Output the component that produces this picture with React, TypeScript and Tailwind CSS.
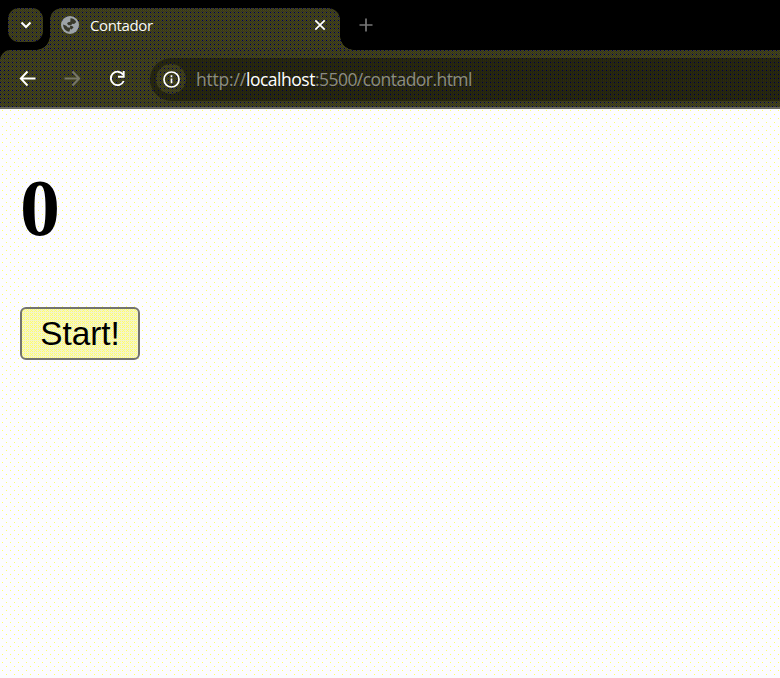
import React from "react";

const toolbarGrain =
  "bg-[#3a3a20] bg-[image:conic-gradient(from_270deg_at_1px_1px,#00004c_90deg,transparent_0),conic-gradient(#3c3c38_25%,#404000_0_50%,#383834_0_75%,#404000_0)] bg-[size:4px_4px,2px_2px]";
const fieldGrain =
  "bg-[#242410] bg-[image:conic-gradient(from_270deg_at_1px_1px,#000040_90deg,transparent_0),conic-gradient(#242420_25%,#2c2c00_0_50%,#20201c_0_75%,#282800_0)] bg-[size:4px_4px,2px_2px]";
const pageGrain =
  "bg-[#fcfcff] bg-[image:conic-gradient(from_270deg_at_1px_1px,#ffff6a_90deg,transparent_0),conic-gradient(from_270deg_at_1px_1px,#ffff6a_90deg,transparent_0)] bg-[size:8px_8px,8px_8px] bg-[position:2px_1px,6px_5px]";
const buttonGrain =
  "bg-[#f4f4c8] bg-[image:conic-gradient(from_270deg_at_1px_1px,#ffff6a_90deg,transparent_0),conic-gradient(from_270deg_at_1px_1px,#ffff6a_90deg,transparent_0)] bg-[size:2px_2px,4px_4px] bg-[position:0_0,1px_1px]";

function TabStrip() {
  return (
    <div className="flex h-[50px] items-start bg-black pl-2 pt-2">
      <div className={`flex h-[34px] w-[35px] items-center justify-center rounded-[11px] ${toolbarGrain}`}>
        <svg width="12" height="8" viewBox="0 0 12 8" fill="none" stroke="#fff" strokeWidth="2">
          <path d="M1.500 1.500 6 6l4.500-4.500" />
        </svg>
      </div>
      <div className={`relative ml-[7px] flex h-[42px] w-[290px] items-start rounded-t-[12px] pl-[11px] pr-[14px] ${toolbarGrain}`}>
        <div className={`absolute bottom-0 -left-[14px] size-[14px] ${toolbarGrain} [mask-image:radial-gradient(circle_at_0_0,transparent_13.500px,#000_14px)]`} />
        <div className={`absolute bottom-0 -right-[14px] size-[14px] ${toolbarGrain} [mask-image:radial-gradient(circle_at_100%_0,transparent_13.500px,#000_14px)]`} />
        <svg className="mt-2" width="18" height="18" viewBox="0 0 18 18">
          <circle cx="9" cy="9" r="9" fill="#9da3a8" />
          <path d="M9.500 2.200c2.500.1 4.800 1.500 5.800 3.800l-2.200 2-2-.3-.8 1.500H7.600L6 7.700l1-1.500 2.300-.4zM2.100 8.500l3.200 1.300 1.500 1.700h2l.5 1.500-1 2.800C4.700 15.400 2.200 12.400 2.100 8.500z" fill="#38382b" />
          <path d="m9 9.700 2.200.2 1.400 1.400-2 2.300-1.500-.9z" fill="#38382b" />
        </svg>
        <span className="ml-[11px] mt-[7px] text-[15px] leading-5 tracking-[-0.380px] text-[#fafaf5]">Contador</span>
        <svg className="ml-auto mt-[11px]" width="12" height="12" viewBox="0 0 12 12" stroke="#fff" strokeWidth="1.700">
          <path d="m1.300 1.300 9.400 9.400m0-9.400-9.400 9.400" />
        </svg>
      </div>
      <svg className="ml-[19px] mt-[10px]" width="14" height="14" viewBox="0 0 14 14" stroke="#777" strokeWidth="1.700">
        <path d="M7 .500v13M.500 7h13" />
      </svg>
    </div>
  );
}

function Toolbar() {
  return (
    <div className="h-[59px] bg-black">
      <div className={`flex h-[59px] items-start rounded-tl-[11px] border-b-2 border-[#67675c] pl-[19px] pt-2 ${toolbarGrain}`}>
        <div className="flex h-[42px] items-center">
          <svg width="18" height="18" viewBox="0 0 18 18" fill="none" stroke="#fff" strokeWidth="1.900">
            <path d="M8.500 1.500 1.800 8.500l6.700 7M2 8.500h14.500" />
          </svg>
          <svg className="ml-[27px]" width="18" height="18" viewBox="0 0 18 18" fill="none" stroke="#777767" strokeWidth="1.900">
            <path d="m8.500 1.500 6.700 7-6.700 7M15 8.500H.500" />
          </svg>
          <svg className="ml-[26px]" width="18" height="18" viewBox="0 0 18 18" fill="none" stroke="#fff" strokeWidth="1.900">
            <path d="M15 4.500A6.700 6.700 0 1 0 15.700 11M15.700 1v5.800H10" />
          </svg>
        </div>
        <div className={`ml-6 flex h-[43px] flex-1 items-center rounded-l-full pl-[6px] ${fieldGrain}`}>
          <div className={`mb-px flex size-[30px] shrink-0 items-center justify-center rounded-full ${toolbarGrain}`}>
            <svg width="17" height="17" viewBox="0 0 17 17" fill="none" stroke="#fff" strokeWidth="1.700">
              <circle cx="8.500" cy="8.500" r="7.500" />
              <path d="M8.500 7.500v4.700M8.500 4.300v1.900" />
            </svg>
          </div>
          <div className="mb-[2px] ml-[10px] whitespace-nowrap text-[17.500px] leading-6 tracking-[-0.540px] text-[#8c8c80]">
            <span className="tracking-[-0.200px]">http://</span>
            <span className="tracking-[-0.480px] text-white">localhost</span>:5500/contador.html
          </div>
        </div>
      </div>
    </div>
  );
}

export default function App() {
  return (
    <div className="flex h-[678px] w-[780px] flex-col overflow-hidden font-['Open_Sans',sans-serif]">
      <TabStrip />
      <Toolbar />
      <main className={`flex flex-1 flex-col items-start pl-5 pt-[53px] ${pageGrain}`}>
        <h1 className="font-['Liberation_Serif',serif] text-[80px] font-bold leading-[92px] text-black">0</h1>
        <button className={`mt-[53px] h-[53px] w-[120px] rounded-[6px] border-2 border-[#737370] text-center font-['Liberation_Sans',sans-serif] text-[33.333px] leading-none text-black ${buttonGrain}`}>
          Start!
        </button>
      </main>
    </div>
  );
}
